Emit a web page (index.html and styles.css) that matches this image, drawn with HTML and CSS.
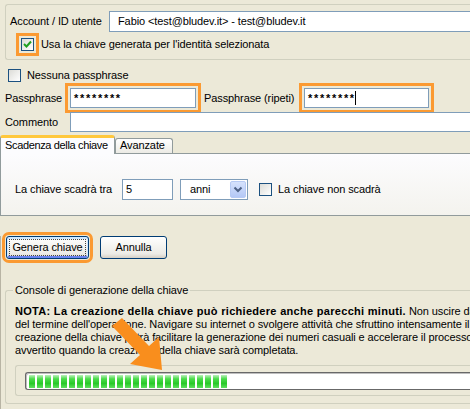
FILE: index.html
```html
<!DOCTYPE html>
<html lang="it">
<head>
<meta charset="utf-8">
<title>Genera chiave</title>
<link rel="stylesheet" href="styles.css">
</head>
<body>
<div class="win">
  <div class="grp-top">
    <div class="row r1">
      <span class="acc">Account / ID utente</span>
      <div class="inp acc-inp">Fabio &lt;test@bludev.it&gt; - test@bludev.it</div>
    </div>
    <div class="row r2">
      <span class="cb hl-cb"><svg width="11" height="11" viewBox="0 0 11 11"><path d="M2 5 L4.5 7.5 L9 2.5" fill="none" stroke="#21A121" stroke-width="2"/></svg></span>
      <span class="cb-lbl7">Usa la chiave generata per l'identità selezionata</span>
    </div>
  </div>

  <div class="row nopass">
    <span class="cb"></span>
    <span class="cb-lbl6">Nessuna passphrase</span>
  </div>

  <div class="row pass">
    <span class="lbl">Passphrase</span>
    <div class="inp pw pw1 hl">********</div>
    <span class="lbl2">Passphrase (ripeti)</span>
    <div class="inp pw pw2 hl">********<span class="caret"></span></div>
  </div>

  <div class="row comm">
    <span class="lbl">Commento</span>
    <div class="inp comm-inp"></div>
  </div>

  <div class="tabs">
    <div class="tab sel">Scadenza della chiave</div>
    <div class="tab">Avanzate</div>
  </div>
  <div class="panel">
    <span class="exp-lbl">La chiave scadrà tra</span>
    <div class="inp num">5</div>
    <div class="select">
      <span class="sel-txt">anni</span>
      <span class="drop"><svg width="14" height="17" viewBox="0 0 14 17"><path d="M3.5 6.5 L7 10 L10.5 6.5" fill="none" stroke="#4D6185" stroke-width="2"/></svg></span>
    </div>
    <span class="cb cb-never"></span>
    <span class="cb-lbl6">La chiave non scadrà</span>
  </div>

  <div class="lower">
    <div class="btns">
      <div class="btn btn-gen hl-btn"><span class="focus">Genera chiave</span></div>
      <div class="btn btn-cancel">Annulla</div>
    </div>

    <div class="console">
      <div class="legend">Console di generazione della chiave</div>
      <div class="note">
        <div class="line"><b>NOTA: La creazione della chiave può richiedere anche parecchi minuti.</b> Non uscire dall'applicazione prima</div>
        <div class="line">del termine dell'operazione. Navigare su internet o svolgere attività che sfruttino intensamente il computer</div>
        <div class="line">creazione della chiave potrà facilitare la generazione dei numeri casuali e accelerare il processo. Sarai</div>
        <div class="line">avvertito quando la creazione della chiave sarà completata.</div>
      </div>
      <div class="frame">
        <div class="progress">
          <span class="blk"></span><span class="blk"></span><span class="blk"></span><span class="blk"></span><span class="blk"></span>
          <span class="blk"></span><span class="blk"></span><span class="blk"></span><span class="blk"></span><span class="blk"></span>
          <span class="blk"></span><span class="blk"></span><span class="blk"></span><span class="blk"></span><span class="blk"></span>
          <span class="blk"></span><span class="blk"></span><span class="blk"></span><span class="blk"></span><span class="blk"></span>
          <span class="blk"></span><span class="blk"></span><span class="blk"></span><span class="blk"></span><span class="blk"></span>
        </div>
      </div>
    </div>
  </div>
</div>

<svg class="arrow" width="470" height="409" viewBox="0 0 470 409">
  <polygon points="112,326 122,318 149,346 159,337 162,370 130,364 140,355" fill="#F98E1D"/>
</svg>
</body>
</html>
```

FILE: styles.css
```css
* { box-sizing: border-box; }
html, body { margin: 0; padding: 0; }
body {
  width: 470px;
  height: 409px;
  overflow: hidden;
  position: relative;
  background: #ECE9D8;
  color: #000;
  font: 11px/13px "Liberation Sans", Arial, sans-serif;
  letter-spacing: -0.1px;
}
b { letter-spacing: 0.3px; }
.win { width: 580px; padding-top: 4px; }
.row { display: flex; align-items: center; white-space: nowrap; }

/* top group */
.grp-top {
  margin-left: 5px;
  height: 56px;
  border: 1px solid #D0D0BF;
  border-right: 0;
  border-radius: 3px 0 0 3px;
  padding: 6px 0 0 4px;
}
.r1 { height: 21px; }
.acc { width: 99px; }
.inp {
  background: #fff;
  border: 1px solid #7F9DB9;
  height: 100%;
  display: flex;
  align-items: center;
  white-space: nowrap;
}
.acc-inp { width: 460px; padding-left: 8px; }
.r2 { height: 24px; padding-left: 11px; }

/* checkbox */
.cb {
  width: 13px;
  height: 13px;
  flex: none;
  border: 1px solid #1C5180;
  background: linear-gradient(135deg, #DCDCD7, #FFFFFF);
  display: flex;
  align-items: center;
  justify-content: center;
}
.cb svg { display: block; }
.cb-lbl7 { margin-left: 7px; }
.cb-lbl6 { margin-left: 6px; }

.hl, .hl-cb, .hl-btn { outline: 3px solid #FB9A32; }
.hl { outline-offset: 2px; }
.hl-cb { outline-offset: 2px; }
.hl-btn { outline-offset: 1px; }

.nopass { height: 18px; margin-top: 6px; padding-left: 8px; }

.pass, .comm { height: 20px; margin-top: 4px; padding-left: 5px; }
.lbl { width: 65px; }
.lbl2 { width: 100px; margin-left: 8px; }
.pw { padding-left: 3px; letter-spacing: 1.7px; font-size: 11px; font-weight: bold; }
.pw1 { width: 126px; }
.pw2 { width: 125px; }
.caret { width: 1px; height: 14px; background: #000; margin-left: -1px; }
.comm-inp { width: 500px; }

/* tabs */
.tabs { display: flex; align-items: flex-end; height: 18px; margin-top: 3px; }
.tab {
  height: 15px;
  width: 58px;
  padding-left: 4px;
  border: 1px solid #919B9C;
  border-bottom: 0;
  border-radius: 3px 3px 0 0;
  background: linear-gradient(#FFFFFF, #ECEBE5);
  line-height: 13px;
  white-space: nowrap;
}
.tab.sel {
  width: 115px;
  height: 19px;
  margin-bottom: -1px;
  position: relative;
  z-index: 1;
  background: #FCFCFE;
  border-top: 3px solid #FFC83C;
  line-height: 13px;
  padding-top: 1px;
  letter-spacing: -0.35px;
}
.panel {
  height: 63px;
  border: 1px solid #919B9C;
  border-right: 0;
  background: linear-gradient(#FCFCFE, #F4F3EE);
  display: flex;
  align-items: center;
  padding: 9px 0 0 14px;
  white-space: nowrap;
}
.exp-lbl { width: 107px; }
.num { width: 51px; height: 21px; padding-left: 3px; }
.select {
  width: 68px;
  height: 21px;
  margin-left: 7px;
  border: 1px solid #7F9DB9;
  background: #fff;
  display: flex;
  align-items: center;
  padding: 1px;
}
.sel-txt { flex: 1; padding-left: 8px; }
.drop {
  width: 16px;
  height: 17px;
  border: 1px solid #B7CAF4;
  border-radius: 2px;
  background: linear-gradient(#D6E2FC, #B4C8F6);
  display: flex;
  align-items: center;
  justify-content: center;
}
.drop svg { display: block; }
.cb-never { margin-left: 11px; }

/* lower area */
.lower { border-left: 1px solid #B8B4A4; padding-bottom: 10px; }
.btns { display: flex; height: 23px; margin-top: 20px; padding-left: 5px; }
.btn {
  height: 23px;
  border: 1px solid #003C74;
  border-radius: 3px;
  background: linear-gradient(#FFFFFF, #F4F4F0 45%, #ECEBE6 80%, #D6D0C5);
  display: flex;
  align-items: center;
  justify-content: center;
  white-space: nowrap;
}
.btn-gen { width: 83px; box-shadow: inset 0 1px 0 1px #CEE7FF, inset 0 -1px 0 1px #6982EE; padding: 2px; }
.focus {
  width: 100%;
  height: 100%;
  border: 1px dotted #444;
  display: flex;
  align-items: center;
  justify-content: center;
}
.btn-cancel { width: 67px; margin-left: 11px; }

.console {
  margin-top: 31px;
  margin-left: 4px;
  border: 1px solid #D0D0BF;
  border-right: 0;
  border-radius: 3px 0 0 3px;
  padding: 0 0 7px 0;
}
.legend {
  width: fit-content;
  margin: -7px 0 0 7px;
  padding: 0 2px;
  background: #ECE9D8;
  line-height: 13px;
}
.note { margin-top: 8px; padding-left: 9px; }
.line { white-space: nowrap; line-height: 13px; height: 13px; }
.frame {
  margin: 8px 0 0 9px;
  height: 31px;
  border: 1px solid #D0D0BF;
  border-right: 0;
  border-radius: 3px 0 0 3px;
  padding: 6px 0 0 9px;
}
.progress {
  height: 18px;
  border: 1px solid #686868;
  border-right: 0;
  border-radius: 3px 0 0 3px;
  background: #fff;
  box-shadow: inset 1px 1px 0 #BEBEBE;
  display: flex;
  align-items: center;
  gap: 2px;
  padding-left: 3px;
}
.blk {
  width: 6px;
  height: 13px;
  flex: none;
  background: linear-gradient(#BDF0BD, #4ADB4A 30%, #28C928 65%, #5EE05E);
}

.arrow { position: absolute; left: 0; top: 0; pointer-events: none; }
```
